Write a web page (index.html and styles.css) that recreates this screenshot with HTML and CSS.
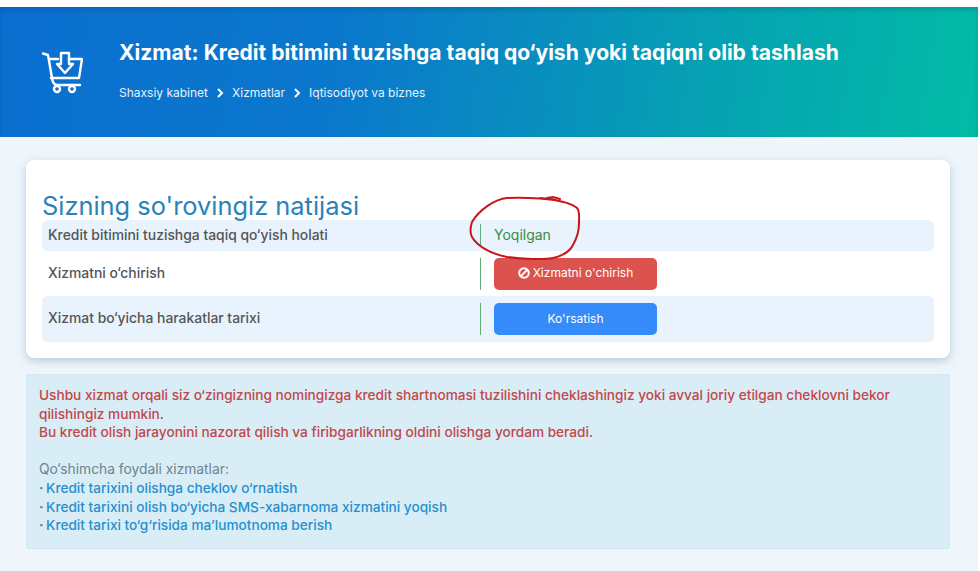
FILE: index.html
```html
<!DOCTYPE html>
<html lang="en">
<head>
    <meta charset="UTF-8">
    <meta name="viewport" content="width=device-width, initial-scale=1.0">
    <title>Kredit bitimini tuzishga taqiq</title>
    <link rel="stylesheet" href="styles.css">
</head>
<body>

    <!-- Hero Section -->
    <header class="hero">
        <svg class="hero-icon" width="42" height="44" viewBox="0 0 42 44" fill="none" stroke="#fff" stroke-width="2.400" stroke-linecap="round" stroke-linejoin="round">
            <path d="M2 3.500L7 5l4 23q1 7 5 7h23"/>
            <path d="M9 9h8M28 9h13l-3 19H10"/>
            <path d="M20 3h8v11h4l-8 9-8-9h4z"/>
            <circle cx="16" cy="39" r="3"/>
            <circle cx="31" cy="39" r="3"/>
        </svg>
        <div class="hero-text">
            <h1 class="hero-title">Xizmat: Kredit bitimini tuzishga taqiq qo‘yish yoki taqiqni olib tashlash</h1>
            <nav class="crumbs">
                <span>Shaxsiy kabinet</span>
                <svg class="crumb-sep" width="7" height="10" viewBox="0 0 7 10" fill="none" stroke="#fff" stroke-width="2"><path d="M1 1l4 4-4 4"/></svg>
                <span>Xizmatlar</span>
                <svg class="crumb-sep" width="7" height="10" viewBox="0 0 7 10" fill="none" stroke="#fff" stroke-width="2"><path d="M1 1l4 4-4 4"/></svg>
                <span>Iqtisodiyot va biznes</span>
            </nav>
        </div>
    </header>

    <!-- Main Content Section -->
    <main class="container">
        <section class="card">
            <h2 class="card-title">Sizning so'rovingiz natijasi</h2>
            <div class="row row-status">
                <div class="row-label">Kredit bitimini tuzishga taqiq qo‘yish holati</div>
                <div class="row-value status-on">Yoqilgan</div>
            </div>
            <div class="row row-plain">
                <div class="row-label">Xizmatni o‘chirish</div>
                <div class="row-value">
                    <button class="btn btn-red">
                        <svg width="12" height="12" viewBox="0 0 12 12" fill="none" stroke="#fff" stroke-width="2"><circle cx="6" cy="6" r="4.800"/><path d="M2.600 9.400l6.800-6.800"/></svg>
                        Xizmatni o'chirish
                    </button>
                </div>
            </div>
            <div class="row row-shaded">
                <div class="row-label">Xizmat bo‘yicha harakatlar tarixi</div>
                <div class="row-value">
                    <button class="btn btn-blue">Ko'rsatish</button>
                </div>
            </div>
            <!-- Hand drawn mark over the status -->
            <svg class="scribble" width="120" height="66" viewBox="0 0 120 66" fill="none" stroke="#c8161d" stroke-width="2" stroke-linecap="round">
                <path d="M96 6C88 3 60 1 40 2C28 3 12 14 5 26C3 32 3 37 5 41C9 48 20 57 40 61C55 63 76 64 86 62C95 60 103 55 106 49C110 42 112 34 112 27C112 20 113 15 110 12C106 8 90 3 73 2"/>
                <path d="M80 2l6-1 7 2"/>
            </svg>
        </section>

        <section class="info">
            <div class="info-red">
                Ushbu xizmat orqali siz o‘zingizning nomingizga kredit shartnomasi tuzilishini cheklashingiz yoki avval joriy etilgan cheklovni bekor qilishingiz mumkin.<br>
                Bu kredit olish jarayonini nazorat qilish va firibgarlikning oldini olishga yordam beradi.
            </div>
            <div class="info-more">Qo‘shimcha foydali xizmatlar:</div>
            <div class="info-link"><span class="dot">·</span><a href="#">Kredit tarixini olishga cheklov o‘rnatish</a></div>
            <div class="info-link"><span class="dot">·</span><a href="#">Kredit tarixini olish bo‘yicha SMS-xabarnoma xizmatini yoqish</a></div>
            <div class="info-link"><span class="dot">·</span><a href="#">Kredit tarixi to‘g‘risida ma’lumotnoma berish</a></div>
        </section>
    </main>

</body>
</html>
```

FILE: styles.css
```css
/* Global Styles */
html, body {
    height: 100%;
}

body {
    margin: 0;
    padding: 7px 2px 0 0;
    box-sizing: border-box;
    font-family: Inter, "Open Sans", sans-serif;
    background-color: #fff;
    overflow: hidden;
}

/* Hero */
.hero {
    height: 130px;
    display: flex;
    align-items: center;
    padding: 0 0 3px 41px;
    box-sizing: border-box;
    color: #fff;
    background: linear-gradient(100deg, #0a6fd0 0%, #0b78cc 35%, #069fb4 70%, #02bca6 100%);
    box-shadow: inset 0 3px 4px rgba(0, 40, 70, 0.18);
}

.hero-icon {
    margin: 3px 36px 0 0;
    flex: none;
}

.hero-title {
    margin: 0 0 20px;
    font-size: 21.100px;
    font-weight: 700;
    line-height: 24px;
}

.crumbs {
    display: flex;
    align-items: center;
    font-size: 12px;
    color: #e6f2fb;
}

.crumb-sep {
    margin: 1px 8px 0 9px;
}

/* Container */
.container {
    height: 434px;
    padding: 23px 28px 0 26px;
    box-sizing: border-box;
    background-color: #eef6fc;
}

/* Result Card */
.card {
    position: relative;
    height: 198px;
    padding: 33px 16px 0;
    box-sizing: border-box;
    background: #fff;
    border-radius: 8px;
    box-shadow: 0 3px 10px rgba(90, 120, 150, 0.35);
}

.card-title {
    margin: 0;
    height: 27px;
    font-size: 25.400px;
    font-weight: 400;
    line-height: 25px;
    color: #2a82b8;
}

.row {
    display: flex;
    align-items: center;
    border-radius: 6px;
    font-size: 13.900px;
    color: #555;
}

.row-status {
    height: 31px;
    margin-bottom: 1px;
    background-color: #e8f3fd;
}

.row-plain {
    height: 43px;
    margin-bottom: 1px;
}

.row-shaded {
    height: 46px;
    background-color: #e8f3fd;
}

.row-label {
    width: 438px;
    padding: 0 0 2px 6px;
    box-sizing: border-box;
    font-weight: 500;
}

.row-status .row-label {
    padding-bottom: 2px;
}

.row-value {
    padding-left: 13px;
    border-left: 1px solid #5fae7a;
    min-height: 23px;
    display: flex;
    align-items: center;
}

.status-on {
    box-sizing: border-box;
    padding-bottom: 3px;
    color: #3c8a45;
    font-size: 14px;
}

/* Button Styles */
.btn {
    width: 163px;
    height: 32px;
    padding: 0 0 2px;
    border: none;
    border-radius: 5px;
    color: #fff;
    font-family: inherit;
    font-size: 12px;
    display: flex;
    align-items: center;
    justify-content: center;
    gap: 3px;
}

.btn-red {
    background-color: #dc524e;
}

.btn-blue {
    background-color: #368bfb;
}

/* Info Box */
.info {
    height: 175px;
    margin-top: 16px;
    padding: 11px 12px 0;
    box-sizing: border-box;
    background-color: #d9edf7;
    border: 1px solid #cfe6f3;
    border-radius: 3px;
    font-size: 13.650px;
    line-height: 18.600px;
}

.info-red {
    color: #c2474a;
    font-weight: 500;
}

.info-more {
    margin-top: 18.600px;
    color: #6c8390;
    font-size: 13.800px;
}

.info-link {
    display: flex;
}

.info-link a {
    color: #2690cf;
    font-weight: 500;
    text-decoration: none;
}

.dot {
    width: 7px;
    font-weight: 700;
    color: #4a7f99;
}

/* Red pen mark */
.scribble {
    position: absolute;
    left: 441px;
    top: 36px;
}
```
